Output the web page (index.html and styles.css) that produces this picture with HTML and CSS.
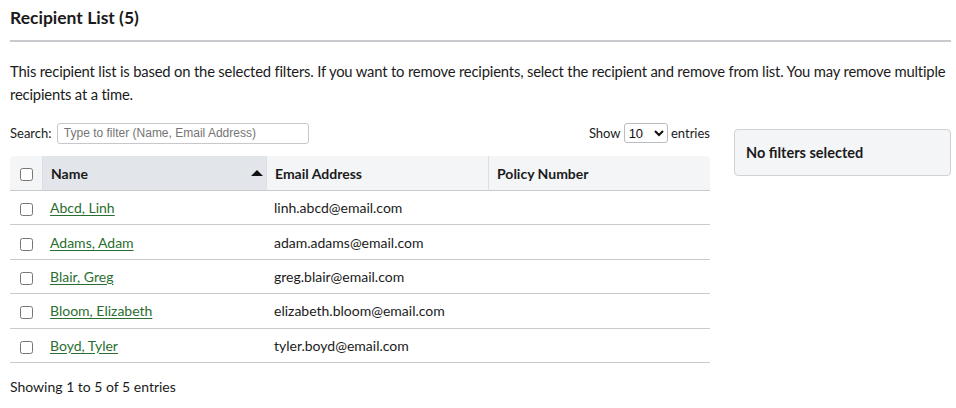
FILE: index.html
```html
<!DOCTYPE html>
<html lang="en">
<head>
<meta charset="utf-8">
<title>Recipient List</title>
<link rel="stylesheet" href="styles.css">
</head>
<body>
<div class="page">
  <h2 class="title">Recipient List (5)</h2>
  <hr class="divider">
  <p class="intro">This recipient list is based on the selected filters. If you want to remove recipients, select the recipient and remove from list. You may remove multiple recipients at a time.</p>
  <div class="layout">
    <div class="main">
      <div class="toolbar">
        <label class="search">Search: <input type="text" placeholder="Type to filter (Name, Email Address)"></label>
        <label class="length">Show <select><option>10</option><option>25</option><option>50</option></select> entries</label>
      </div>
      <table class="grid">
        <thead>
          <tr>
            <th class="c-check"><input type="checkbox"></th>
            <th class="c-name sorted"><span>Name</span><span class="sort-arrow"></span></th>
            <th class="c-email">Email Address</th>
            <th class="c-policy">Policy Number</th>
          </tr>
        </thead>
        <tbody>
          <tr><td class="c-check"><input type="checkbox"></td><td><a href="#">Abcd, Linh</a></td><td>linh.abcd@email.com</td><td></td></tr>
          <tr><td class="c-check"><input type="checkbox"></td><td><a href="#">Adams, Adam</a></td><td>adam.adams@email.com</td><td></td></tr>
          <tr><td class="c-check"><input type="checkbox"></td><td><a href="#">Blair, Greg</a></td><td>greg.blair@email.com</td><td></td></tr>
          <tr><td class="c-check"><input type="checkbox"></td><td><a href="#">Bloom, Elizabeth</a></td><td>elizabeth.bloom@email.com</td><td></td></tr>
          <tr><td class="c-check"><input type="checkbox"></td><td><a href="#">Boyd, Tyler</a></td><td>tyler.boyd@email.com</td><td></td></tr>
        </tbody>
      </table>
      <div class="info">Showing 1 to 5 of 5 entries</div>
    </div>
    <aside class="side">
      <div class="filters">No filters selected</div>
    </aside>
  </div>
</div>
</body>
</html>
```
FILE: styles.css
```css
html, body { margin: 0; padding: 0; background: #fff; }
body {
  font-family: "Lato", "Noto Sans", sans-serif;
  color: #1b1b1b;
  font-size: 15px;
}
.page { padding: 5px 5px 0 10px; }
.title {
  margin: 0;
  font-size: 17.5px;
  font-weight: 700;
  line-height: 26px;
}
.divider {
  margin: 9px 0 0;
  border: 0;
  height: 2px;
  background: #c8cacd;
}
.intro {
  margin: 18px 0 0;
  line-height: 23px;
  font-size: 14.8px;
  letter-spacing: -0.18px;
}
.layout {
  display: grid;
  grid-template-columns: 700px 1fr;
  column-gap: 24px;
  margin-top: 13px;
}
.toolbar {
  display: flex;
  justify-content: space-between;
  align-items: center;
  height: 28px;
  font-size: 13px;
}
.search input {
  font-family: "Liberation Sans", Arial, sans-serif;
  font-size: 12px;
  width: 252px;
  height: 21px;
  box-sizing: border-box;
  border: 1px solid #c6c8cc;
  border-radius: 3px;
  padding: 0 6px;
  margin-left: 2px;
  color: #333;
}
.search input::placeholder { color: #757575; }
.length select {
  font-family: "Liberation Sans", Arial, sans-serif;
  font-size: 13px;
  height: 20px;
  width: 44px;
  border: 1px solid #b9bcc0;
  border-radius: 3px;
  color: #111;
  background: #fff;
}
.grid {
  width: 100%;
  border-collapse: separate;
  border-spacing: 0;
  margin-top: 9px;
  font-size: 14px;
}
.grid th {
  background: #f4f5f7;
  text-align: left;
  font-weight: 700;
  height: 34px;
  padding: 0 8px;
  border-bottom: 1px solid #c8cacd;
  border-left: 1px solid #dcdee1;
}
.grid th:first-child { border-left: 0; border-top-left-radius: 4px; }
.grid th:last-child { border-top-right-radius: 4px; }
.grid th.sorted { background: #e2e6ea; }
.grid .c-check { width: 32px; padding: 0; text-align: center; }
.grid th.c-name { width: 207px; position: relative; }
.grid th.c-email { width: 205px; }
.sort-arrow {
  position: absolute;
  right: 3px;
  top: 14px;
  width: 0; height: 0;
  border-left: 6px solid transparent;
  border-right: 6px solid transparent;
  border-bottom: 6px solid #111;
}
.grid td {
  height: 33.4px;
  padding: 0 8px;
  border-bottom: 1px solid #c8cacd;
}
.grid input[type=checkbox] { margin: 0; width: 13px; height: 13px; vertical-align: middle; }
.grid a { color: #2b6e31; text-decoration: underline; text-underline-offset: 2px; }
.info {
  margin-top: 15px;
  font-size: 14px;
  line-height: 18px;
}
.filters {
  margin-top: 10px;
  background: #f4f5f7;
  border: 1px solid #cfd2d6;
  border-radius: 4px;
  height: 47px;
  box-sizing: border-box;
  padding: 0 11px;
  display: flex;
  align-items: center;
  font-weight: 700;
  font-size: 14.5px;
}
```
